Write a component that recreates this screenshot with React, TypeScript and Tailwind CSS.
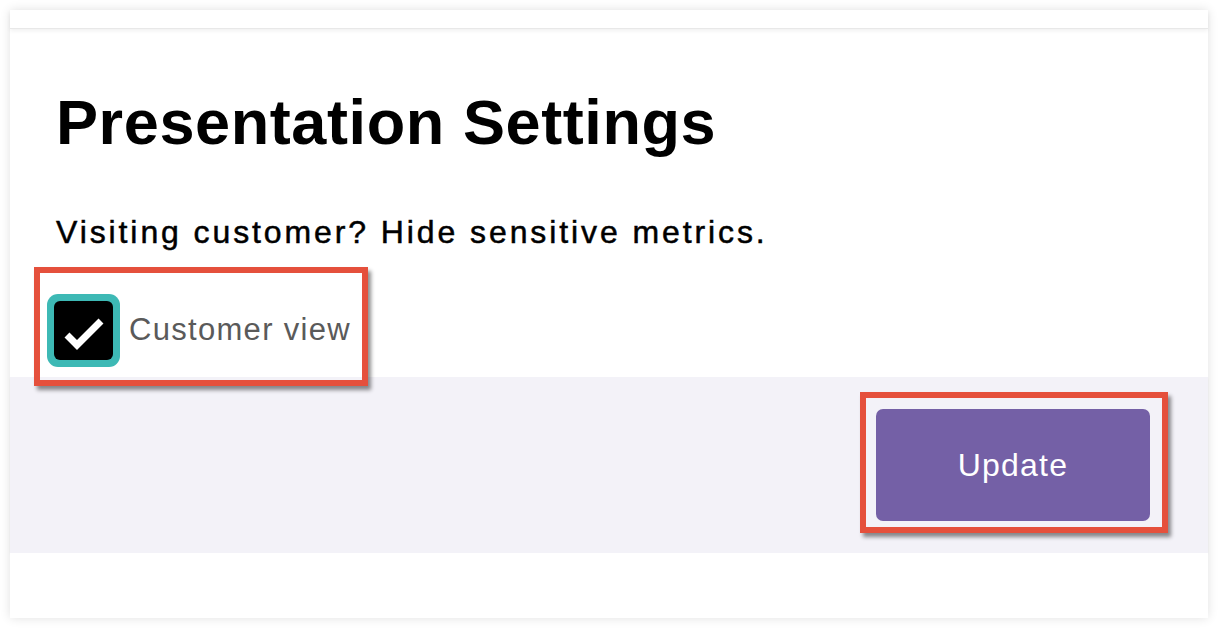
import React from "react";

const font = { fontFamily: '"Liberation Sans", Arial, sans-serif' };

export default function App() {
  return (
    <div className="w-[1218px] h-[628px] bg-white p-[10px]" style={font}>
      <div className="w-[1198px] h-[608px] bg-white flex flex-col shadow-[0_0_10px_rgba(0,0,0,0.12)]">
        {/* top strip */}
        <div className="h-[19px] border-b border-[#e8e8e8] shadow-[0_2px_4px_rgba(0,0,0,0.06)]" />

        {/* body */}
        <div className="h-[348px] pl-[46px] flex flex-col">
          <h1 className="mt-[57px] text-[63px] leading-[72px] font-bold tracking-[0.6px] text-black">
            Presentation Settings
          </h1>
          <p className="mt-[54px] text-[32px] leading-[40px] tracking-[2.9px] text-black [-webkit-text-stroke:0.5px_black]">
            Visiting customer? Hide sensitive metrics.
          </p>

          <div className="relative mt-[42px] ml-[-9px] flex items-center gap-[9px] w-fit">
            <div className="w-[73px] h-[73px] rounded-[11px] bg-[#3db9b5] p-[7px]">
              <div className="w-full h-full rounded-[6px] bg-black flex items-center justify-center">
                <svg width="58" height="58" viewBox="0 0 58 58">
                  <path d="M12 33 L22 43 L46 19" fill="none" stroke="white" strokeWidth="7" />
                </svg>
              </div>
            </div>
            <span className="text-[31px] tracking-[1.3px] text-[#5a5a5a]">Customer view</span>

            {/* annotation */}
            <div className="absolute left-[-13px] top-[-27px] w-[334px] h-[119px] border-[6px] border-[#e5503c] shadow-[3px_4px_4px_rgba(0,0,0,0.45)]" />
          </div>
        </div>

        {/* footer */}
        <div className="h-[176px] bg-[#f3f2f8] flex items-center justify-end pr-[58px] shadow-[0_1px_2px_rgba(0,0,0,0.05)]">
          <div className="relative">
            <button className="w-[274px] h-[112px] rounded-[7px] bg-[#7460a6] text-white text-[32px] tracking-[1.2px]">
              Update
            </button>
            <div className="absolute left-[-16px] top-[-17px] w-[308px] h-[141px] border-[6px] border-[#e5503c] shadow-[3px_4px_4px_rgba(0,0,0,0.45)]" />
          </div>
        </div>

        <div className="flex-1 bg-white" />
      </div>
    </div>
  );
}
